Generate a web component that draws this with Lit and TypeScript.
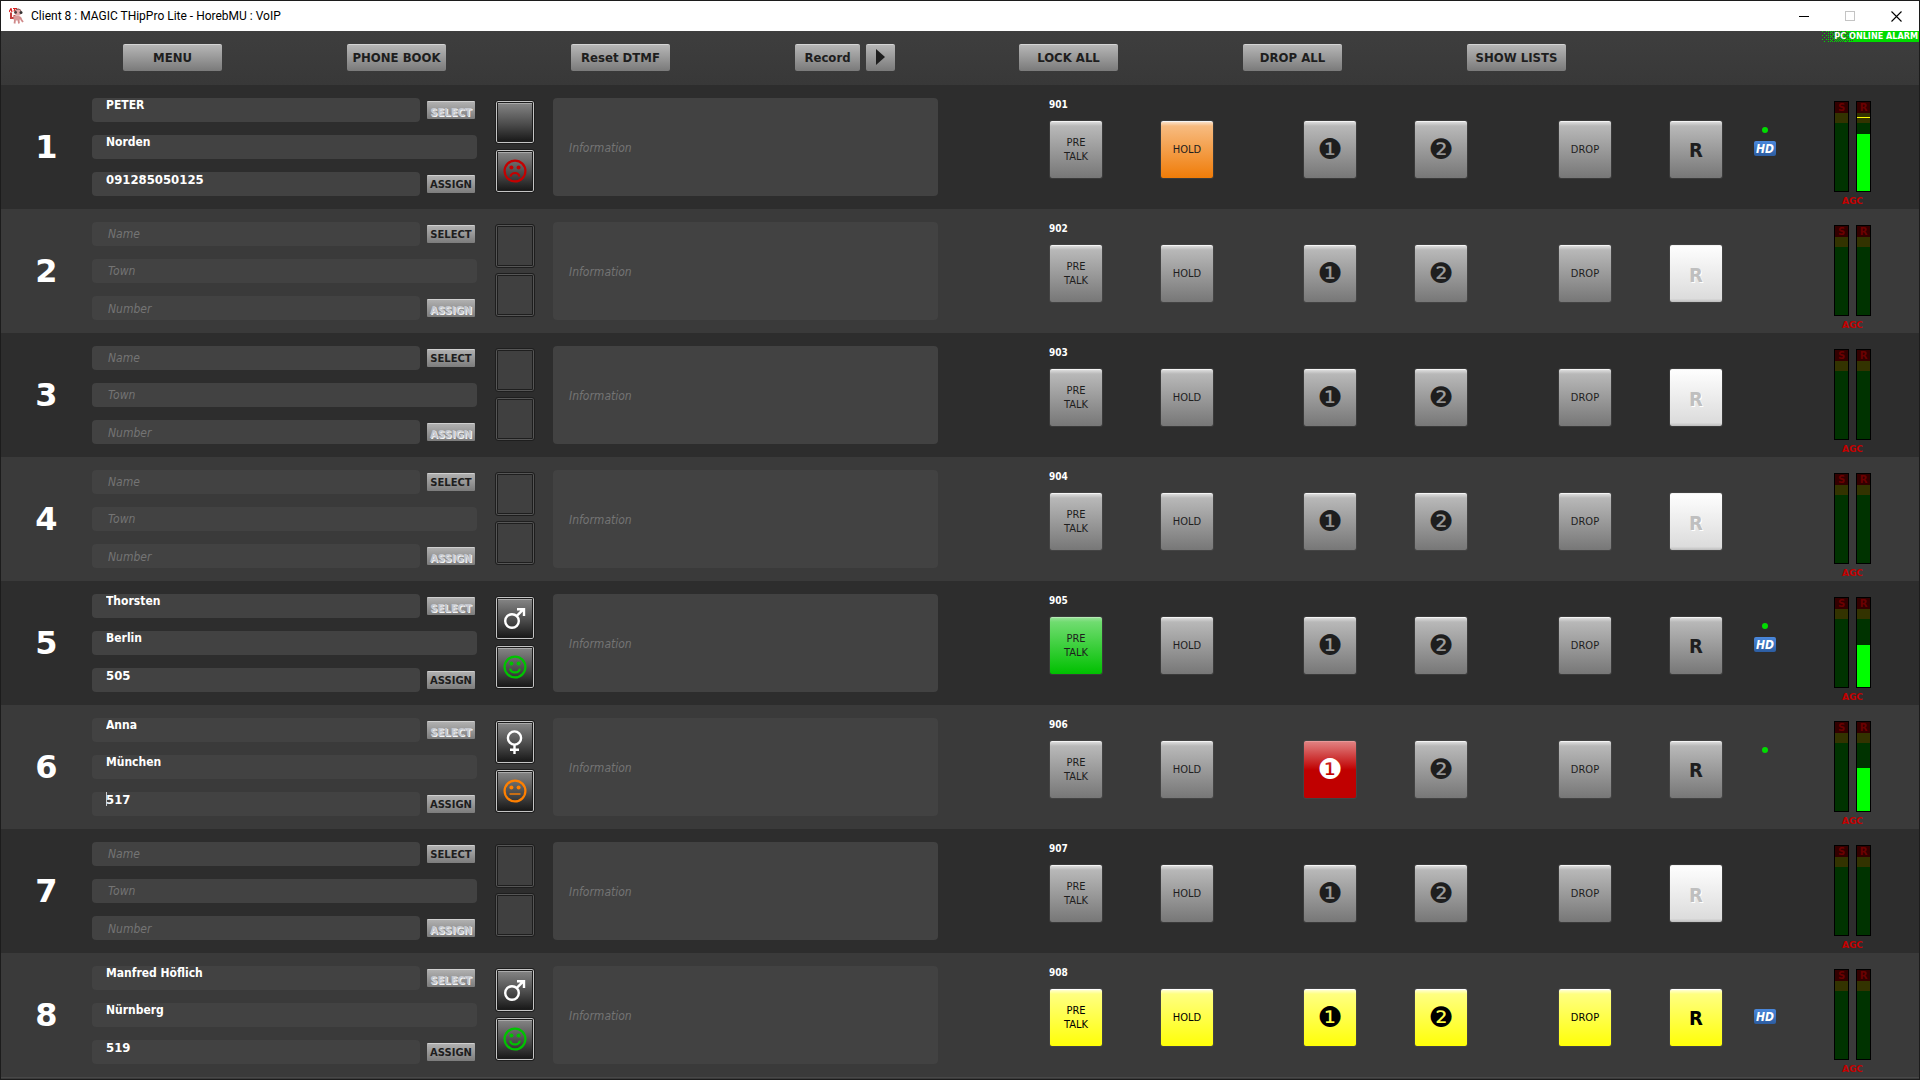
import { LitElement, html, css, svg, nothing } from "lit";
import { customElement, property } from "lit/decorators.js";
import { classMap } from "lit/directives/class-map.js";
import { styleMap } from "lit/directives/style-map.js";

type Tone = "plain" | "orange" | "green" | "red" | "yellow" | "blank";
type Mood = "sad" | "happy" | "neutral";
type Gender = "male" | "female" | "unknown";

interface CallLine {
  line: number;
  name?: string;
  town?: string;
  number?: string;
  gender?: Gender;
  mood?: Mood;
  all?: Tone;
  preTalk?: Tone;
  hold?: Tone;
  one?: Tone;
  online?: boolean;
  hd?: boolean;
  level?: number;
  peak?: number;
  caret?: boolean;
}

const LINES: CallLine[] = [
  { line: 1, name: "PETER", town: "Norden", number: "091285050125", gender: "unknown", mood: "sad", hold: "orange", online: true, hd: true, level: 64, peak: 82 },
  { line: 2 },
  { line: 3 },
  { line: 4 },
  { line: 5, name: "Thorsten", town: "Berlin", number: "505", gender: "male", mood: "happy", preTalk: "green", online: true, hd: true, level: 47 },
  { line: 6, name: "Anna", town: "München", number: "517", gender: "female", mood: "neutral", one: "red", online: true, level: 48, caret: true },
  { line: 7 },
  { line: 8, name: "Manfred Höflich", town: "Nürnberg", number: "519", gender: "male", mood: "happy", all: "yellow", hd: true },
];

const buttonStyles = css`
  * { box-sizing: border-box; }
  button {
    margin: 0;
    padding: 0;
    border: 0;
    font-family: "DejaVu Sans Condensed", "DejaVu Sans", sans-serif;
    color: #1e1e1e;
    white-space: nowrap;
  }
`;

const face = (mood: Mood) => {
  const mouth = {
    sad: svg`<path d="M7.6 17.6Q8.2 14 12 14T16.4 17.6" />`,
    happy: svg`<path d="M7.2 13.6Q7.8 17.4 12 17.4T16.8 13.6" />`,
    neutral: svg`<path d="M6.5 15H17.5" stroke-width="1.4" />`,
  }[mood];
  return svg`<svg class=${"face " + mood} viewBox="0 0 24 24" width="24" height="24" aria-hidden="true">
    <g fill="none" stroke="currentColor" stroke-width="2.2">
      <circle cx="12" cy="12" r="10.4" />${mouth}
    </g>
    <circle cx="8.4" cy="8.6" r="2" fill="currentColor" />
    <circle cx="15.6" cy="8.6" r="2" fill="currentColor" />
  </svg>`;
};

const genderIcon = (gender: Gender) => {
  if (gender === "unknown") return nothing;
  return svg`<svg viewBox="0 0 24 26" width="24" height="26" aria-hidden="true" fill="none" stroke="#fff" stroke-width="2.4">
    ${gender === "male"
      ? svg`<circle cx="9" cy="16" r="6.8" /><path d="M13.6 11.2L20 4.6M14 4.2H21V11" />`
      : svg`<circle cx="11.5" cy="9" r="6.6" /><path d="M11.5 15.4V25M7 20.8H16" />`}
  </svg>`;
};

@customElement("call-line")
export class CallLineRow extends LitElement {
  @property({ attribute: false }) data!: CallLine;

  static styles = [
    buttonStyles,
    css`
      :host { display: block; background: #2d2d2d; }
      :host(.even) { background: #3a3a3a; }
      .row {
        display: grid;
        grid-template-columns: 91fr 403fr 58fr 497fr 111fr 143fr 111fr 144fr 111fr 84fr 80fr 85fr;
        height: 124px;
      }
      .index {
        display: flex;
        align-items: center;
        justify-content: center;
        font: bold 32px "DejaVu Sans", sans-serif;
        color: #fff;
      }
      .fields {
        display: grid;
        grid-template-columns: 1fr 57px;
        grid-auto-rows: 24px;
        row-gap: 13px;
        padding: 13px 18px 0 0;
      }
      .fields .wide { grid-column: 1 / -1; }
      input, textarea {
        display: block;
        width: 100%;
        margin: 0;
        border: 0;
        outline: 0;
        border-radius: 4px;
        background: #424242;
        color: #fff;
      }
      input {
        height: 24px;
        padding: 0 14px 10px;
        font: bold 12px "DejaVu Sans Condensed", "DejaVu Sans", sans-serif;
      }
      input.number { font-size: 13px; }
      input:placeholder-shown { padding: 0 16px; font-weight: normal; }
      input.caret {
        background: linear-gradient(#ccc, #ccc) 14px 0 / 1px 14px no-repeat #424242;
      }
      ::placeholder {
        color: #747474;
        opacity: 1;
        font: italic 12px "DejaVu Sans Condensed", "DejaVu Sans", sans-serif;
      }
      .side { display: flex; align-items: center; padding-left: 7px; }
      .side button {
        width: 48px;
        height: 18px;
        border-radius: 1px;
        border-top: 1px solid #cfcfcf;
        background: linear-gradient(#b0b0b0, #7c7c7c);
        font: bold 10px "DejaVu Sans", sans-serif;
      }
      .side button:disabled {
        padding-top: 4px;
        color: #c4c7ce;
        text-shadow: 1px 1px 0 #f4f4f4;
      }
      .icons { display: flex; flex-direction: column; gap: 5px; padding-top: 15px; }
      .icon {
        display: flex;
        align-items: center;
        justify-content: center;
        width: 40px;
        height: 44px;
        border: 1px solid #1e1e1e;
        border-radius: 3px;
        background: linear-gradient(#8a8a8a, #4c4c4c 55%, #141414);
        box-shadow: inset 0 0 0 1px #c4c4c4, inset 0 0 0 2px #1c1c1c, inset 0 3px 0 #aaa;
      }
      .icon.empty {
        background: #404040;
        box-shadow: inset 0 0 0 1px #565656, inset 0 0 0 2px #1e1e1e;
      }
      .face { display: block; }
      .sad { color: #c40000; }
      .happy { color: #00c400; }
      .neutral { color: #ff8000; }
      .info { padding: 13px 112px 13px 0; }
      textarea { height: 98px; padding: 43px 16px 0; resize: none; overflow: hidden; font: 12px "DejaVu Sans Condensed", "DejaVu Sans", sans-serif; }
      .cell { display: flex; flex-direction: column; padding-top: 13px; }
      .ext {
        height: 23px;
        padding-top: 1px;
        margin-left: -1px;
        font: bold 10px/12px "DejaVu Sans Condensed", "DejaVu Sans", sans-serif;
        color: #fff;
      }
      .key {
        width: 52px;
        height: 57px;
        border-radius: 2px;
        border-top: 1px solid #f4f4f4;
        background: linear-gradient(#dcdcdc, #b8b8b8 4px, #777);
        box-shadow: 0 0 0 1px rgba(90, 90, 90, 0.3);
        font-size: 11px;
        line-height: 14px;
      }
      .digit { font-size: 28px; line-height: 28px; font-family: "DejaVu Sans", sans-serif; }
      .ring { font-size: 20px; font-weight: bold; }
      .orange { background: linear-gradient(#fbe0c6, #f7bb80 4px, #f07c08); }
      .green { background: linear-gradient(#94e094, #70dc70 4px, #00c000); border-top-color: #b4ecb4; }
      .red { background: linear-gradient(#e08080, #c00000 50%); border-top-color: #e89898; color: #fff; }
      .yellow { background: linear-gradient(#ffffd0, #ffff80 4px, #ffff08); color: #000; border-top-color: #fff; }
      .blank { padding-top: 2px; background: linear-gradient(#fefefe, #dcdcdc 94%, #bcbcbc); color: #bfbfbf; text-shadow: 1px 1px 0 #fff; }
      .status { display: flex; flex-direction: column; gap: 8px; align-items: flex-start; padding-top: 42px; }
      .dot { width: 6px; height: 6px; margin-left: 8px; border-radius: 50%; }
      .dot.on { background: #00dc00; }
      .hd {
        width: 22px;
        height: 15px;
        border-radius: 2px;
        background: linear-gradient(#4a88dc, #2c5ca0);
        color: #fff;
        font: italic bold 12px/16px "DejaVu Sans Condensed", "DejaVu Sans", sans-serif;
        text-align: center;
      }
      .levels { display: grid; grid-template-columns: 15px 15px; column-gap: 7px; align-content: start; padding-top: 16px; }
      .meter {
        position: relative;
        height: 91px;
        border: 1px solid #000;
        background: linear-gradient(#330000 11px, #333300 11px 21px, #003300 21px);
        color: #6c0000;
        font: bold 10px/11px "DejaVu Sans", sans-serif;
        text-align: center;
      }
      .fill, .peak { position: absolute; left: 0; right: 0; }
      .fill { bottom: 0; background: #00ff00; }
      .peak { height: 1px; background: #ffff00; }
      .agc {
        grid-column: 1 / -1;
        padding-top: 3px;
        color: #c40000;
        font: bold 9px/12px "DejaVu Sans", sans-serif;
        text-align: center;
      }
    `,
  ];

  private key(label: unknown, tone: Tone | undefined, kind: string, aria: string) {
    const shade = this.data.all ?? tone ?? "plain";
    return html`<button class=${`key ${kind} ${shade}`} aria-label=${aria} ?disabled=${shade === "blank"}>${label}</button>`;
  }

  private cell(content: unknown, ext?: number) {
    return html`<div class="cell"><div class="ext">${ext ?? nothing}</div>${content}</div>`;
  }

  render() {
    const d = this.data;
    const busy = !!d.name;
    const ext = 900 + d.line;
    return html`
      <div class="row">
        <div class="index">${d.line}</div>
        <div class="fields">
          <input aria-label="Name" placeholder="Name" .value=${d.name ?? ""} />
          <div class="side"><button ?disabled=${busy}>SELECT</button></div>
          <input class="wide" aria-label="Town" placeholder="Town" .value=${d.town ?? ""} />
          <input class=${classMap({ number: true, caret: !!d.caret })} aria-label="Number" placeholder="Number" .value=${d.number ?? ""} />
          <div class="side"><button ?disabled=${!busy}>ASSIGN</button></div>
        </div>
        <div class="icons">
          <button class=${classMap({ icon: true, empty: !busy })} aria-label="Gender">${d.gender ? genderIcon(d.gender) : nothing}</button>
          <button class=${classMap({ icon: true, empty: !busy })} aria-label="Mood">${d.mood ? face(d.mood) : nothing}</button>
        </div>
        <div class="info"><textarea aria-label="Information" placeholder="Information"></textarea></div>
        ${this.cell(this.key(html`PRE<br />TALK`, d.preTalk, "", "Pre talk"), ext)}
        ${this.cell(this.key("HOLD", d.hold, "", "Hold"))}
        ${this.cell(this.key("❶", d.one, "digit", "Studio 1"))}
        ${this.cell(this.key("❷", undefined, "digit", "Studio 2"))}
        ${this.cell(this.key("DROP", undefined, "", "Drop"))}
        ${this.cell(this.key("R", busy ? "plain" : "blank", "ring", "R"))}
        <div class="status">
          <span class=${classMap({ dot: true, on: !!d.online })}></span>
          ${d.hd ? html`<span class="hd">HD</span>` : nothing}
        </div>
        <div class="levels">
          <div class="meter">S</div>
          <div class="meter">R
            ${d.level ? html`<div class="fill" style=${styleMap({ height: `${d.level}%` })}></div>` : nothing}
            ${d.peak ? html`<div class="peak" style=${styleMap({ bottom: `${d.peak}%` })}></div>` : nothing}
          </div>
          <div class="agc">AGC</div>
        </div>
      </div>
    `;
  }
}

/* Ordered dither that thins out towards the left edge of the alarm strip. */
const ditherDots = () => {
  const bayer = [[0, 8, 2, 10], [12, 4, 14, 6], [3, 11, 1, 9], [15, 7, 13, 5]];
  const dots = [];
  for (let y = 0; y < 11; y++)
    for (let x = 0; x < 42; x++)
      if (bayer[y % 4][x % 4] < (x / 42) * 17 - 1) dots.push(svg`<rect x=${x} y=${y} width="1" height="1" />`);
  return dots;
};

@customElement("app-root")
export class AppRoot extends LitElement {
  static styles = [
    buttonStyles,
    css`
      :host { display: block; }
      .window {
        min-height: 100vh;
        border: 1px solid #1c1c1c;
        background: #3a3a3a;
      }
      .titlebar { display: flex; align-items: center; height: 30px; padding-left: 8px; background: #fff; color: #000; }
      .title { flex: 1; margin: 0; padding: 0 0 1px 7px; font: 12px Roboto, "Open Sans", sans-serif; }
      .titlebar button { display: grid; place-items: center; width: 46px; height: 30px; background: none; }
      .toolbar {
        position: relative;
        display: grid;
        grid-template-columns: 122fr repeat(7, 224fr) 228fr;
        height: 54px;
        padding-top: 13px;
        background: linear-gradient(#3e3e3e, #383838);
      }
      .slot { display: flex; gap: 6px; }
      .slot:nth-of-type(1) { grid-column-start: 2; }
      .tool {
        width: 99px;
        height: 27px;
        padding-bottom: 2px;
        border-radius: 2px;
        border-top: 1px solid #d4d4d4;
        background: linear-gradient(#b6b6b6, #7a7a7a);
        font-size: 13px;
        font-weight: bold;
      }
      .tool.record { width: 65px; }
      .tool.play { width: 29px; display: grid; place-items: center; }
      .alarm {
        position: absolute;
        top: 0;
        right: 0;
        display: flex;
        justify-content: flex-end;
        width: 101px;
        height: 11px;
        color: #fff;
        font: bold 9px/11px "DejaVu Sans Condensed", "DejaVu Sans", sans-serif;
        white-space: nowrap;
        background: linear-gradient(#00dc00, #00dc00) 42px 0 / 59px 11px no-repeat;
      }
      .alarm svg { position: absolute; left: 0; top: 0; }
      .alarm span { position: relative; padding-right: 1px; }
      .footer { height: 1px; background: #484848; }
    `,
  ];

  render() {
    return html`
      <div class="window">
        <header class="titlebar">
          <svg width="15" height="16" viewBox="0 0 15 16" aria-hidden="true">
            <path d="M0 4L2 0.5L3 4M4 0.5H6L5 3.5M6.5 0.5H8" fill="none" stroke="#d81c1c" stroke-width="1.2" />
            <path d="M2 4.5V10H5.5V7" fill="none" stroke="#c43c3c" stroke-width="2" />
            <rect x="4.5" y="7.5" width="6.5" height="5" rx="1.5" fill="#d89898" />
            <path d="M6 12L5.5 15.5M9.5 12L10 15.5M11 9L12.5 12L14 14" fill="none" stroke="#d08a8a" stroke-width="1.8" />
            <circle cx="9" cy="4.2" r="3.4" fill="#e2aaaa" />
            <path d="M6.4 2.6Q9 -0.6 12.2 2.8" fill="none" stroke="#705050" stroke-width="1" />
            <circle cx="6.6" cy="4.4" r="1.4" fill="#4a3a3a" />
            <circle cx="12" cy="4.6" r="1.5" fill="#333" />
          </svg>
          <h1 class="title">Client 8 : MAGIC THipPro Lite - HorebMU : VoIP</h1>
          <button aria-label="Minimize"><svg width="10" height="11"><path d="M0 5.5H10" stroke="#000" /></svg></button>
          <button aria-label="Maximize"><svg width="10" height="10"><rect x="0.5" y="0.5" width="9" height="9" fill="none" stroke="#c4c4c4" /></svg></button>
          <button aria-label="Close"><svg width="11" height="11"><path d="M0.5 0.5L10.5 10.5M10.5 0.5L0.5 10.5" stroke="#000" stroke-width="1.1" /></svg></button>
        </header>
        <nav class="toolbar">
          <div class="slot"><button class="tool">MENU</button></div>
          <div class="slot"><button class="tool">PHONE BOOK</button></div>
          <div class="slot"><button class="tool">Reset DTMF</button></div>
          <div class="slot">
            <button class="tool record">Record</button>
            <button class="tool play" aria-label="Play"><svg width="9" height="16"><path d="M0 0L9 8L0 16Z" fill="#1e1e1e" /></svg></button>
          </div>
          <div class="slot"><button class="tool">LOCK ALL</button></div>
          <div class="slot"><button class="tool">DROP ALL</button></div>
          <div class="slot"><button class="tool">SHOW LISTS</button></div>
          <div class="alarm" role="status">
            <svg width="42" height="11" fill="#00dc00" aria-hidden="true">${ditherDots()}</svg>
            <span>PC ONLINE ALARM</span>
          </div>
        </nav>
        <main>
          ${LINES.map((l) => html`<call-line class=${l.line % 2 ? "odd" : "even"} .data=${l}></call-line>`)}
        </main>
        <div class="footer"></div>
      </div>
    `;
  }
}
